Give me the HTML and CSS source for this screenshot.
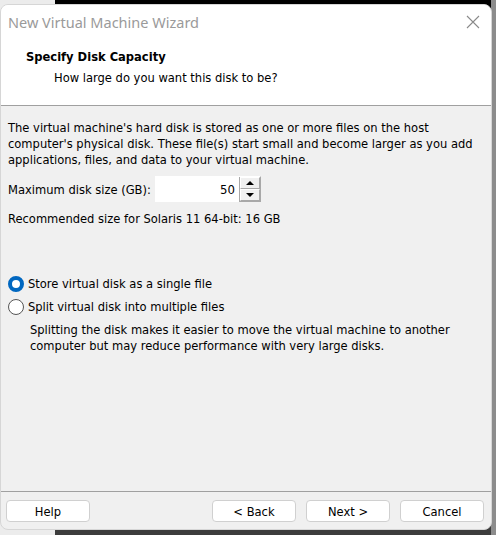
FILE: index.html
```html
<!DOCTYPE html>
<html lang="en">
<head>
    <meta charset="UTF-8">
    <title>New Virtual Machine Wizard</title>
    <link rel="stylesheet" href="styles.css">
</head>
<body>
<div class="wizard">
    <div class="titlebar">
        <span class="title">New Virtual Machine Wizard</span>
        <svg class="close" width="14" height="14" viewBox="0 0 14 14">
            <path d="M1 1 L13 13 M13 1 L1 13" stroke="#8a8a8a" stroke-width="1.1" fill="none"/>
        </svg>
    </div>
    <div class="header">
        <div class="head-title">Specify Disk Capacity</div>
        <div class="head-sub">How large do you want this disk to be?</div>
    </div>

    <div class="content">
        <p class="info">The virtual machine's hard disk is stored as one or more files on the host computer's physical disk. These file(s) start small and become larger as you add applications, files, and data to your virtual machine.</p>

        <div class="size-row">
            <label for="disksize">Maximum disk size (GB):</label>
            <div class="spin">
                <input type="text" id="disksize" value="50">
                <div class="spin-btns">
                    <div class="spin-btn"><span class="arrow-up"></span></div>
                    <div class="spin-btn"><span class="arrow-down"></span></div>
                </div>
            </div>
        </div>

        <p class="recommend">Recommended size for Solaris 11 64-bit: 16 GB</p>

        <div class="options">
            <div class="radio-row">
                <span class="radio checked"></span>
                <span>Store virtual disk as a single file</span>
            </div>
            <div class="radio-row">
                <span class="radio"></span>
                <span>Split virtual disk into multiple files</span>
            </div>
            <p class="note">Splitting the disk makes it easier to move the virtual machine to another computer but may reduce performance with very large disks.</p>
        </div>
    </div>

    <div class="footer">
        <button class="btn">Help</button>
        <div class="nav">
            <button class="btn">&lt; Back</button>
            <button class="btn">Next &gt;</button>
            <button class="btn">Cancel</button>
        </div>
    </div>
</div>
</body>
</html>
```

FILE: styles.css
```css
* {
    margin: 0;
    padding: 0;
    box-sizing: border-box;
}

body {
    width: 496px;
    height: 535px;
    overflow: hidden;
    padding: 4px 4px 0 0;
    font-family: "DejaVu Sans Condensed", "DejaVu Sans", sans-serif;
    font-size: 12.8px;
    color: #000;
    background:
        linear-gradient(#ececec, #ececec) 0 0 / 55px 100% no-repeat,
        linear-gradient(to right, transparent 491px, #8c8c8c 491px),
        linear-gradient(#000 50%, #3c3c3c 50%);
}

.wizard {
    width: 492px;
    height: 526px;
    background: #f0f0f0;
    border-radius: 8px;
    border: 1px solid #d6d6d6;
    display: flex;
    flex-direction: column;
    overflow: hidden;
}

.titlebar {
    background: #fff;
    height: 34px;
    display: flex;
    align-items: center;
    justify-content: space-between;
    padding: 0 11px 0 7px;
}

.title {
    font-family: "Noto Sans", "Open Sans", sans-serif;
    font-size: 14.5px;
    color: #9a9a9a;
}

.header {
    background: #fff;
    height: 67px;
    border-bottom: 1px solid #a0a0a0;
    padding: 10px 0 0 25px;
}

.head-title {
    font-weight: bold;
    line-height: 16px;
}

.head-sub {
    padding: 5px 0 0 28px;
    line-height: 16px;
}

.content {
    flex: 1;
    padding: 14px 6px 0 7px;
}

.info {
    line-height: 16px;
}

.size-row {
    display: flex;
    align-items: center;
    margin-top: 8px;
}

.size-row label {
    width: 147px;
}

.spin {
    display: flex;
    height: 26px;
    border: 1px solid #a8a8a8;
    border-left: none;
    border-top-color: #fff;
}

.spin input {
    width: 84px;
    height: 25px;
    border: none;
    outline: none;
    background: #fff;
    text-align: right;
    padding-right: 4px;
    font: inherit;
    font-size: 13px;
}

.spin-btns {
    width: 21px;
    display: flex;
    flex-direction: column;
    border-left: 1px solid #a8a8a8;
    background: #f0f0f0;
}

.spin-btn {
    flex: 1;
    display: flex;
    align-items: center;
    justify-content: center;
    border: 1px solid #fff;
    border-right-color: #a8a8a8;
    border-bottom-color: #a8a8a8;
}

.arrow-up {
    border-left: 4px solid transparent;
    border-right: 4px solid transparent;
    border-bottom: 4px solid #000;
}

.arrow-down {
    border-left: 4px solid transparent;
    border-right: 4px solid transparent;
    border-top: 4px solid #000;
}

.recommend {
    margin-top: 9px;
    line-height: 16px;
}

.options {
    margin-top: 45px;
}

.radio-row {
    display: flex;
    align-items: center;
    gap: 4px;
    height: 23px;
}

.radio {
    width: 16px;
    height: 16px;
    border-radius: 50%;
    border: 1px solid #555;
    background: #fff;
}

.radio.checked {
    border: 4px solid #0067c0;
    background: #fff;
}

.note {
    padding: 4px 0 0 22px;
    line-height: 16px;
}

.footer {
    height: 38px;
    border-top: 1px solid #a0a0a0;
    display: flex;
    justify-content: space-between;
    align-items: flex-start;
    padding: 8px 7px 0 5px;
}

.nav {
    display: flex;
    gap: 10px;
}

.btn {
    width: 84px;
    height: 22px;
    background: #fff;
    border: 1px solid #d0d0d0;
    border-radius: 4px;
    font: inherit;
    font-size: 12.8px;
    color: #000;
}
```
